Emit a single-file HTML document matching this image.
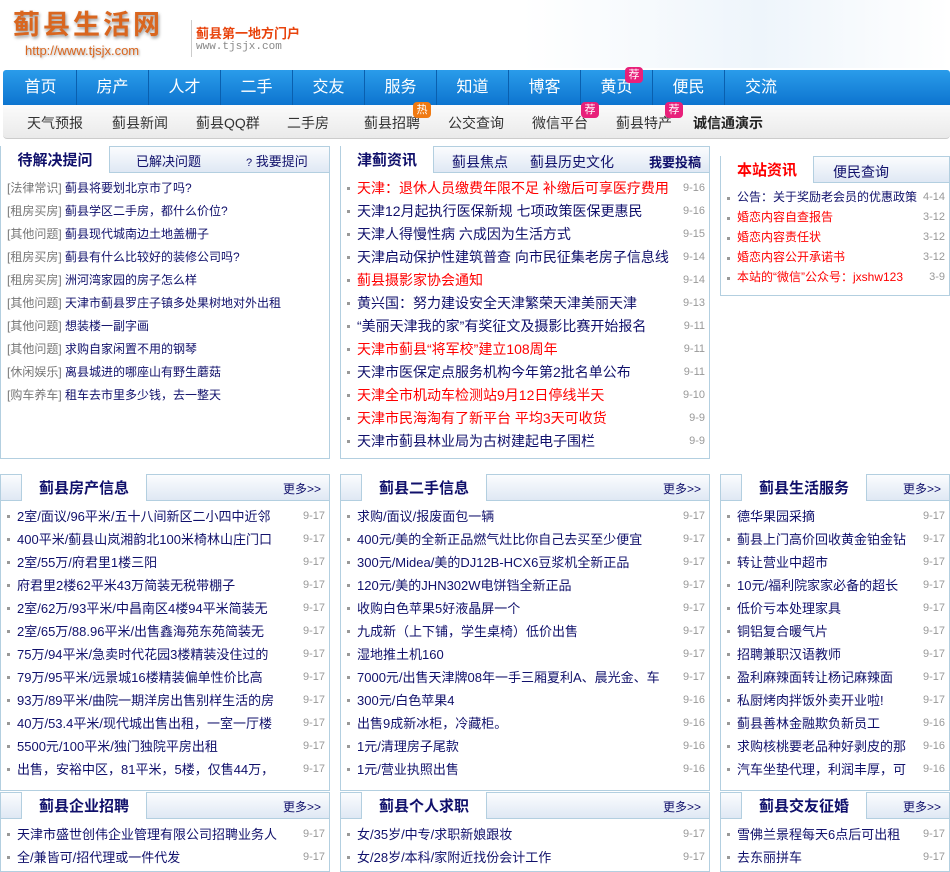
<!DOCTYPE html>
<html><head><meta charset="utf-8">
<style>
*{margin:0;padding:0;box-sizing:border-box}
body{width:950px;height:864px;overflow:hidden;background:#fff;font-family:"Liberation Sans","Noto Sans CJK SC",sans-serif;position:relative;color:#10106b}
.a{position:absolute}
.nav{left:3px;top:70px;width:947px;height:35px;background:linear-gradient(#2a9cea,#0d74cf);border-radius:3px 3px 0 0}
.nav span{position:absolute;top:0;width:72px;height:35px;line-height:35px;text-align:center;color:#fff;font-size:16px;border-right:1px solid #0a5fae;}
.sub{left:3px;top:105px;width:947px;height:34px;background:linear-gradient(#fbfbfb,#eaeaea);border-bottom:1px solid #ccc;border-radius:0 0 4px 4px}
.sub span{position:absolute;top:0;line-height:36px;font-size:14px;color:#333}
.tag{position:absolute;width:18px;height:16px;border-radius:4px;color:#fff;font-size:11px;line-height:16px;text-align:center}
.box{position:absolute;border:1px solid #b3cfe0;background:#fff}
.hd{position:absolute;left:0;top:0;right:0;height:26px;background:linear-gradient(#fbfcfe,#dfe8f4);border-bottom:1px solid #b3cfe0}
.tab{position:absolute;top:-1px;height:27px;background:#fff;border-right:1px solid #b3cfe0;border-left:1px solid #b3cfe0;font-weight:bold;font-size:15px;text-align:center;line-height:30px;color:#10106b}
ul{list-style:none;position:absolute}
li{position:relative;height:23px;line-height:23px;font-size:13px;padding-left:14px;white-space:nowrap;overflow:hidden}
li:before{content:"";position:absolute;left:4px;top:10px;width:3px;height:3px;background:#999}
li i{font-style:normal;position:absolute;right:0;top:0;color:#999;font-size:11px;background:#fff;padding-left:3px}
.r{color:#f00}
.g{color:#777}
.more{position:absolute;right:8px;top:5px;font-size:12px;color:#10106b}
</style></head><body>
<div class="a" style="left:0;top:0;width:950px;height:68px;background:linear-gradient(90deg,#fff 55%,#eef5fb 80%,#fff)"></div>
<div class="a" style="left:13px;top:9px;font-size:27px;line-height:32px;font-weight:bold;color:#d9661f;letter-spacing:3px;text-shadow:1px 2px 3px #999">蓟县生活网</div>
<div class="a" style="left:25px;top:43px;font-size:13px;color:#d9661f;text-shadow:1px 1px 2px #aaa">http://www.tjsjx.com</div>
<div class="a" style="left:191px;top:20px;width:1px;height:37px;background:#ccc"></div>
<div class="a" style="left:196px;top:23px;font-size:13px;font-weight:bold;color:#e8430c">蓟县第一地方门户</div>
<div class="a" style="left:196px;top:41px;font-size:11px;color:#888;font-family:'Liberation Mono',monospace">www.tjsjx.com</div>

<div class="a nav">
<span style="left:2px">首页</span><span style="left:74px">房产</span><span style="left:146px">人才</span><span style="left:218px">二手</span><span style="left:290px">交友</span><span style="left:362px">服务</span><span style="left:434px">知道</span><span style="left:506px">博客</span><span style="left:578px">黄页</span><span style="left:650px">便民</span><span style="left:722px;border:none">交流</span>
</div>
<div class="tag" style="left:625px;top:67px;background:#e8207a">荐</div>
<div class="a sub">
<span style="left:24px">天气预报</span><span style="left:109px">蓟县新闻</span><span style="left:193px">蓟县QQ群</span><span style="left:284px">二手房</span><span style="left:361px">蓟县招聘</span><span style="left:445px">公交查询</span><span style="left:529px">微信平台</span><span style="left:613px">蓟县特产</span><span style="left:690px;font-weight:bold;color:#222">诚信通演示</span>
</div>
<div class="tag" style="left:413px;top:102px;background:#f07a12">热</div>
<div class="tag" style="left:581px;top:102px;background:#e8207a">荐</div>
<div class="tag" style="left:665px;top:102px;background:#e8207a">荐</div>

<!-- left Q box -->
<div class="box" style="left:0;top:146px;width:330px;height:313px">
<div class="hd"></div>
<div class="tab" style="left:-1px;width:110px;text-align:center">待解决提问</div>
<div class="a" style="left:135px;top:4px;font-size:13px">已解决问题</div>
<div class="a" style="left:245px;top:4px;font-size:13px"><span style="font-size:11px">?</span> 我要提问</div>
<ul style="left:6px;top:30px;width:318px">
<li style="padding-left:0"><span class="g">[法律常识]</span> 蓟县将要划北京市了吗?</li>
<li style="padding-left:0"><span class="g">[租房买房]</span> 蓟县学区二手房，都什么价位?</li>
<li style="padding-left:0"><span class="g">[其他问题]</span> 蓟县现代城南边土地盖栅子</li>
<li style="padding-left:0"><span class="g">[租房买房]</span> 蓟县有什么比较好的装修公司吗?</li>
<li style="padding-left:0"><span class="g">[租房买房]</span> 洲河湾家园的房子怎么样</li>
<li style="padding-left:0"><span class="g">[其他问题]</span> 天津市蓟县罗庄子镇多处果树地对外出租</li>
<li style="padding-left:0"><span class="g">[其他问题]</span> 想装楼一副字画</li>
<li style="padding-left:0"><span class="g">[其他问题]</span> 求购自家闲置不用的钢琴</li>
<li style="padding-left:0"><span class="g">[休闲娱乐]</span> 离县城进的哪座山有野生蘑菇</li>
<li style="padding-left:0"><span class="g">[购车养车]</span> 租车去市里多少钱，去一整天</li>
</ul>
</div>
<style>.box ul li[style*="padding-left:0"]:before{display:none}.box ul li[style*="padding-left:0"]{font-size:12px}</style>

<!-- middle news -->
<div class="box" style="left:340px;top:146px;width:370px;height:313px">
<div class="hd"></div>
<div class="tab" style="left:-1px;width:94px">津蓟资讯</div>
<div class="a" style="left:111px;top:5px;font-size:14px">蓟县焦点</div>
<div class="a" style="left:189px;top:5px;font-size:14px">蓟县历史文化</div>
<div class="a" style="left:308px;top:5px;font-size:13px;font-weight:bold">我要投稿</div>
<ul style="left:2px;top:30px;width:362px">
<li class="r" style="font-size:14px">天津：退休人员缴费年限不足 补缴后可享医疗费用<i>9-16</i></li>
<li style="font-size:14px">天津12月起执行医保新规 七项政策医保更惠民<i>9-16</i></li>
<li style="font-size:14px">天津人得慢性病 六成因为生活方式<i>9-15</i></li>
<li style="font-size:14px">天津启动保护性建筑普查 向市民征集老房子信息线<i>9-14</i></li>
<li class="r" style="font-size:14px">蓟县摄影家协会通知<i>9-14</i></li>
<li style="font-size:14px">黄兴国：努力建设安全天津繁荣天津美丽天津<i>9-13</i></li>
<li style="font-size:14px">“美丽天津我的家”有奖征文及摄影比赛开始报名<i>9-11</i></li>
<li class="r" style="font-size:14px">天津市蓟县“将军校”建立108周年<i>9-11</i></li>
<li style="font-size:14px">天津市医保定点服务机构今年第2批名单公布<i>9-11</i></li>
<li class="r" style="font-size:14px">天津全市机动车检测站9月12日停线半天<i>9-10</i></li>
<li class="r" style="font-size:14px">天津市民海淘有了新平台 平均3天可收货<i>9-9</i></li>
<li style="font-size:14px">天津市蓟县林业局为古树建起电子围栏<i>9-9</i></li>
</ul>
</div>

<!-- right site info -->
<div class="box" style="left:720px;top:156px;width:230px;height:140px">
<div class="hd"></div>
<div class="tab" style="left:-1px;width:94px;color:#f00">本站资讯</div>
<div class="a" style="left:112px;top:5px;font-size:14px">便民查询</div>
<ul style="left:2px;top:30px;width:222px">
<li style="height:20px;line-height:20px;font-size:12px">公告：关于奖励老会员的优惠政策<i>4-14</i></li>
<li class="r" style="height:20px;line-height:20px;font-size:12px">婚恋内容自查报告<i>3-12</i></li>
<li class="r" style="height:20px;line-height:20px;font-size:12px">婚恋内容责任状<i>3-12</i></li>
<li class="r" style="height:20px;line-height:20px;font-size:12px">婚恋内容公开承诺书<i>3-12</i></li>
<li class="r" style="height:20px;line-height:20px;font-size:12px">本站的“微信”公众号：jxshw123<i>3-9</i></li>
</ul>
</div>

<!-- bottom row 1 -->
<div class="box" style="left:0;top:474px;width:330px;height:317px">
<div class="hd"></div><div class="tab" style="left:20px;width:126px">蓟县房产信息</div><div class="more">更多&gt;&gt;</div>
<ul style="left:2px;top:30px;width:322px">
<li>2室/面议/96平米/五十八间新区二小四中近邻<i>9-17</i></li>
<li>400平米/蓟县山岚湘韵北100米椅林山庄门口<i>9-17</i></li>
<li>2室/55万/府君里1楼三阳<i>9-17</i></li>
<li>府君里2楼62平米43万简装无税带棚子<i>9-17</i></li>
<li>2室/62万/93平米/中昌南区4楼94平米简装无<i>9-17</i></li>
<li>2室/65万/88.96平米/出售鑫海苑东苑简装无<i>9-17</i></li>
<li>75万/94平米/急卖时代花园3楼精装没住过的<i>9-17</i></li>
<li>79万/95平米/远景城16楼精装偏单性价比高<i>9-17</i></li>
<li>93万/89平米/曲院一期洋房出售别样生活的房<i>9-17</i></li>
<li>40万/53.4平米/现代城出售出租，一室一厅楼<i>9-17</i></li>
<li>5500元/100平米/独门独院平房出租<i>9-17</i></li>
<li>出售，安裕中区，81平米，5楼，仅售44万，<i>9-17</i></li>
</ul></div>
<div class="box" style="left:340px;top:474px;width:370px;height:317px">
<div class="hd"></div><div class="tab" style="left:20px;width:126px">蓟县二手信息</div><div class="more">更多&gt;&gt;</div>
<ul style="left:2px;top:30px;width:362px">
<li>求购/面议/报废面包一辆<i>9-17</i></li>
<li>400元/美的全新正品燃气灶比你自己去买至少便宜<i>9-17</i></li>
<li>300元/Midea/美的DJ12B-HCX6豆浆机全新正品<i>9-17</i></li>
<li>120元/美的JHN302W电饼铛全新正品<i>9-17</i></li>
<li>收购白色苹果5好液晶屏一个<i>9-17</i></li>
<li>九成新（上下铺，学生桌椅）低价出售<i>9-17</i></li>
<li>湿地推土机160<i>9-17</i></li>
<li>7000元/出售天津牌08年一手三厢夏利A、晨光金、车<i>9-17</i></li>
<li>300元/白色苹果4<i>9-16</i></li>
<li>出售9成新冰柜，冷藏柜。<i>9-16</i></li>
<li>1元/清理房子尾款<i>9-16</i></li>
<li>1元/营业执照出售<i>9-16</i></li>
</ul></div>
<div class="box" style="left:720px;top:474px;width:230px;height:317px">
<div class="hd"></div><div class="tab" style="left:20px;width:126px">蓟县生活服务</div><div class="more">更多&gt;&gt;</div>
<ul style="left:2px;top:30px;width:222px">
<li>德华果园采摘<i>9-17</i></li>
<li>蓟县上门高价回收黄金铂金钻<i>9-17</i></li>
<li>转让营业中超市<i>9-17</i></li>
<li>10元/福利院家家必备的超长<i>9-17</i></li>
<li>低价亏本处理家具<i>9-17</i></li>
<li>铜铝复合暖气片<i>9-17</i></li>
<li>招聘兼职汉语教师<i>9-17</i></li>
<li>盈利麻辣面转让杨记麻辣面<i>9-17</i></li>
<li>私厨烤肉拌饭外卖开业啦!<i>9-17</i></li>
<li>蓟县善林金融欺负新员工<i>9-16</i></li>
<li>求购核桃要老品种好剥皮的那<i>9-16</i></li>
<li>汽车坐垫代理，利润丰厚，可<i>9-16</i></li>
</ul></div>

<!-- bottom row 2 -->
<div class="box" style="left:0;top:792px;width:330px;height:80px">
<div class="hd"></div><div class="tab" style="left:20px;width:126px">蓟县企业招聘</div><div class="more">更多&gt;&gt;</div>
<ul style="left:2px;top:30px;width:322px">
<li>天津市盛世创伟企业管理有限公司招聘业务人<i>9-17</i></li>
<li>全/兼皆可/招代理或一件代发<i>9-17</i></li>
</ul></div>
<div class="box" style="left:340px;top:792px;width:370px;height:80px">
<div class="hd"></div><div class="tab" style="left:20px;width:126px">蓟县个人求职</div><div class="more">更多&gt;&gt;</div>
<ul style="left:2px;top:30px;width:362px">
<li>女/35岁/中专/求职新娘跟妆<i>9-17</i></li>
<li>女/28岁/本科/家附近找份会计工作<i>9-17</i></li>
</ul></div>
<div class="box" style="left:720px;top:792px;width:230px;height:80px">
<div class="hd"></div><div class="tab" style="left:20px;width:126px">蓟县交友征婚</div><div class="more">更多&gt;&gt;</div>
<ul style="left:2px;top:30px;width:222px">
<li>雪佛兰景程每天6点后可出租<i>9-17</i></li>
<li>去东丽拼车<i>9-17</i></li>
</ul></div>
</body></html>
